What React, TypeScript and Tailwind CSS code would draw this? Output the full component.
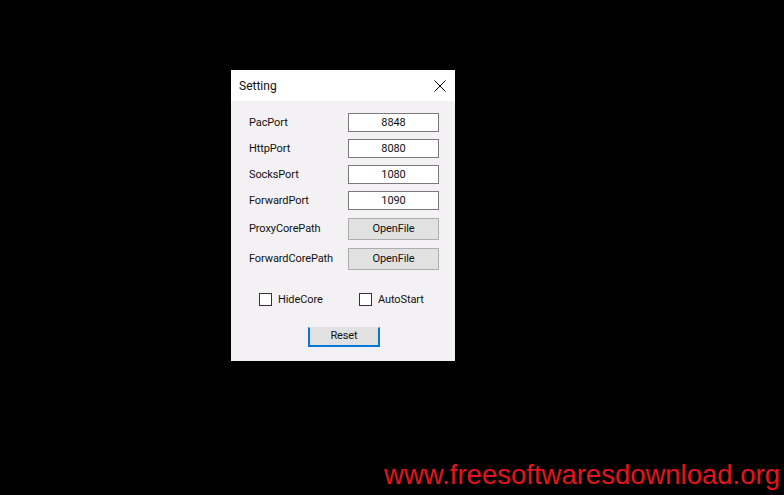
const FONT = "font-['Roboto','Liberation_Sans',sans-serif]";

const ports = [
  { label: "PacPort", value: "8848" },
  { label: "HttpPort", value: "8080" },
  { label: "SocksPort", value: "1080" },
  { label: "ForwardPort", value: "1090" },
];

const paths = ["ProxyCorePath", "ForwardCorePath"];

function Checkbox({ label }: { label: string }) {
  return (
    <label className="flex h-[13px] items-center gap-[6px] leading-[13px]">
      <span className="h-[13px] w-[13px] border border-[#333333] bg-white" />
      <span>{label}</span>
    </label>
  );
}

export default function App() {
  return (
    <div className={`h-[495px] w-[784px] overflow-hidden bg-black ${FONT}`}>
      {/* dialog */}
      <div className="ml-[231px] mt-[70px] flex h-[291px] w-[224px] flex-col bg-[#f4f1f4] text-[11px] tracking-[-0.1px] text-[#111111]">
        <div className="flex h-[31px] items-center justify-between bg-white pl-[8px] pr-[9px]">
          <span className="text-[12px] tracking-normal">Setting</span>
          <svg width="12" height="12" viewBox="0 0 12 12" className="text-black">
            <path d="M0.5 0.5 L11.5 11.5 M11.5 0.5 L0.5 11.5" stroke="currentColor" strokeWidth="1" />
          </svg>
        </div>

        <div className="flex flex-col pl-[18px] pt-[12px]">
          <div className="flex flex-col gap-[7px]">
            {ports.map((p) => (
              <div key={p.label} className="flex items-center">
                <span className="w-[99px] pt-[2px]">{p.label}</span>
                <div className="flex h-[19px] w-[91px] items-center justify-center border border-[#7a7a7a] bg-white pt-[1px]">
                  {p.value}
                </div>
              </div>
            ))}
          </div>

          <div className="mt-[8px] flex flex-col gap-[8px]">
            {paths.map((p) => (
              <div key={p} className="flex items-center">
                <span className="w-[99px] pt-[1px]">{p}</span>
                <div className="flex h-[22px] w-[91px] items-center justify-center border border-[#adadad] bg-[#e1e1e1]">
                  OpenFile
                </div>
              </div>
            ))}
          </div>

          <div className="ml-[10px] mt-[23px] flex">
            <div className="w-[100px]">
              <Checkbox label="HideCore" />
            </div>
            <Checkbox label="AutoStart" />
          </div>

          <div className="ml-[59px] mt-[21px] flex h-[20px] w-[72px] items-center justify-center border-x-2 border-b-2 border-t border-x-[#0078d7] border-b-[#0078d7] border-t-[#e1e1e1] bg-[#e1e1e1]">
            Reset
          </div>
        </div>
      </div>

      {/* watermark */}
      <div className="mt-[99px] pr-[4px] text-right font-['Liberation_Sans',Arial,sans-serif] text-[27.5px] leading-[30px] text-[#e3151b]">
        www.freesoftwaresdownload.org
      </div>
    </div>
  );
}
